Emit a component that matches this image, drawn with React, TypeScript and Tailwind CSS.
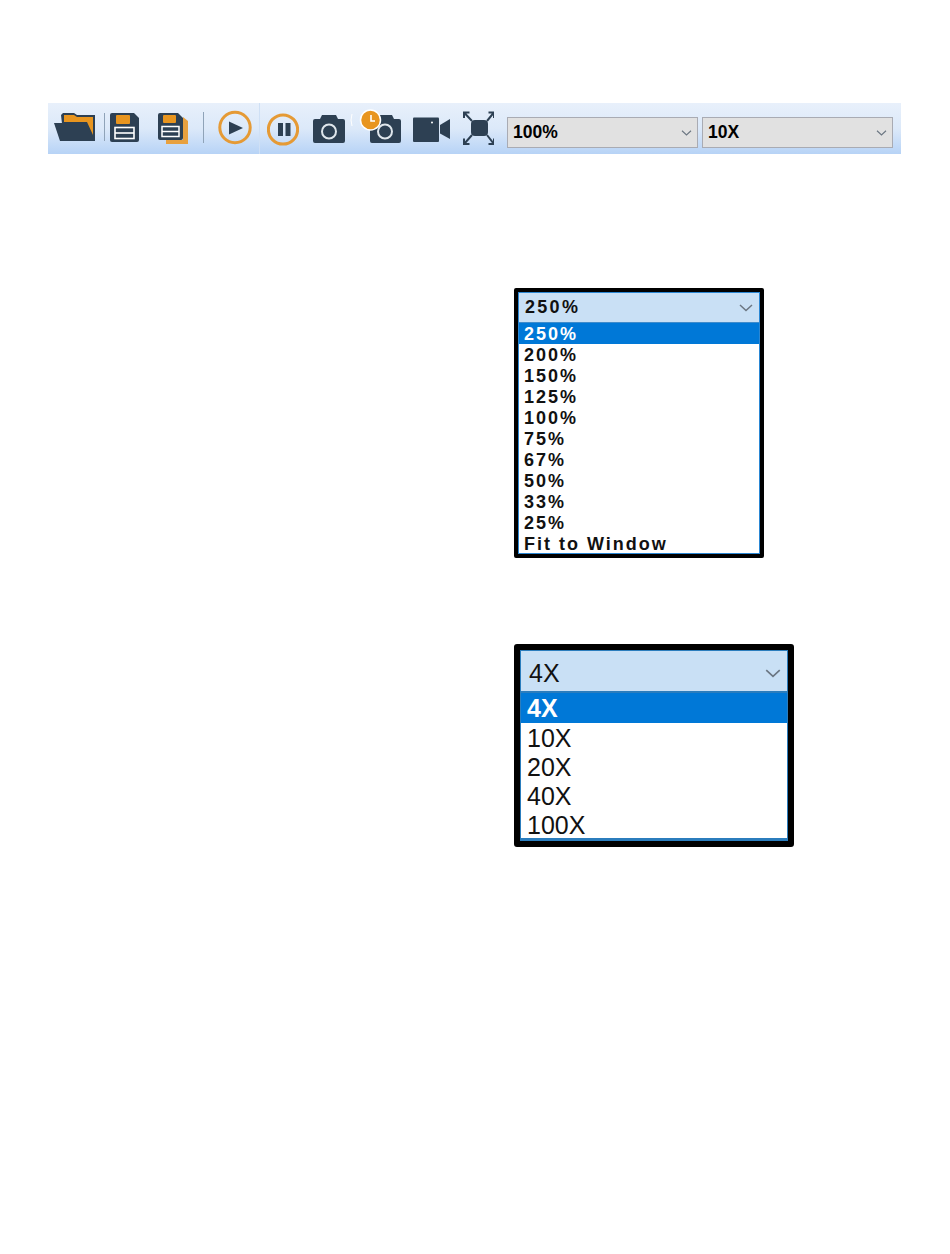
const DARK = "#2d4053";
const ORANGE = "#e8951f";

const FolderIcon = () => (
  <svg className="ml-[6px] w-[43px] h-[51px] shrink-0" viewBox="0 0 43 51">
    <path d="M7 12 L9 10 H20 L23 12 H41 V38 H10 Z" fill={DARK} />
    <path d="M10 12 H20 L23 14 H39 V32 L33 19 H10 Z" fill={ORANGE} />
    <path d="M0 20 H31 L41 38 H6 Z" fill={DARK} />
  </svg>
);

const SaveIcon = () => (
  <svg className="ml-[5px] w-[29px] h-[51px] shrink-0" viewBox="0 0 29 51">
    <path d="M2 10 H24 L29 15 V37 Q29 39 27 39 H2 Q0 39 0 37 V12 Q0 10 2 10 Z" fill={DARK} />
    <rect x="6" y="12" width="14" height="9" rx="1" fill={ORANGE} />
    <rect x="5" y="24.5" width="19" height="11" fill="none" stroke="#ffffff" strokeWidth="1.6" />
    <path d="M5 30 H24" stroke="#ffffff" strokeWidth="1.6" />
  </svg>
);

const SaveCopyIcon = () => (
  <svg className="ml-[19px] w-[30px] h-[51px] shrink-0" viewBox="0 0 30 51">
    <path d="M8 37 V41 H30 V18 L25 14 V37 Z" fill="#e8a13f" />
    <path d="M2 10 H20 L25 15 V35 Q25 37 23 37 H2 Q0 37 0 35 V12 Q0 10 2 10 Z" fill={DARK} />
    <rect x="5" y="12" width="13" height="8" rx="1" fill={ORANGE} />
    <rect x="4" y="23.5" width="17" height="10" fill="none" stroke="#ffffff" strokeWidth="1.5" />
    <path d="M4 28.5 H21" stroke="#ffffff" strokeWidth="1.5" />
  </svg>
);

const PlayIcon = () => (
  <svg className="ml-[14px] w-[34px] h-[51px] shrink-0" viewBox="0 0 34 51">
    <circle cx="17" cy="24.5" r="15.2" fill="none" stroke="#e59a35" strokeWidth="3" />
    <path d="M11 18.5 L25 25 L11 31.5 Z" fill={DARK} />
  </svg>
);

const PauseIcon = () => (
  <svg className="ml-[7px] w-[32px] h-[51px] shrink-0" viewBox="0 0 32 51">
    <circle cx="16" cy="26.5" r="14.6" fill="none" stroke="#e59a35" strokeWidth="3" />
    <rect x="11" y="20" width="5" height="13" fill={DARK} />
    <rect x="18.5" y="20" width="5" height="13" fill={DARK} />
  </svg>
);

const CameraIcon = () => (
  <svg className="ml-[14px] w-[32px] h-[51px] shrink-0" viewBox="0 0 32 51">
    <path d="M2 16 H7 L9 12 H23 L25 16 H30 Q32 16 32 18 V38 Q32 40 30 40 H2 Q0 40 0 38 V18 Q0 16 2 16 Z" fill={DARK} />
    <circle cx="16" cy="28.5" r="7" fill="none" stroke="#dfe6ec" strokeWidth="2" />
  </svg>
);

const TimerCameraIcon = () => (
  <svg className="ml-[15px] w-[41px] h-[51px] shrink-0 overflow-visible" viewBox="0 0 41 51">
    <path d="M-8 11 Q-10 17 -8 23" fill="none" stroke="#ffffff" strokeWidth="1" />
    <path d="M12 16 H16 L18 12 H32 L34 16 H39 Q41 16 41 18 V38 Q41 40 39 40 H12 Q10 40 10 38 V18 Q10 16 12 16 Z" fill={DARK} />
    <circle cx="25" cy="28.5" r="7" fill="none" stroke="#dfe6ec" strokeWidth="2" />
    <circle cx="10.5" cy="17" r="10" fill={ORANGE} stroke="#ffffff" strokeWidth="1.5" />
    <path d="M11 12 V18 H15" fill="none" stroke="#ffffff" strokeWidth="1.6" />
  </svg>
);

const VideoIcon = () => (
  <svg className="ml-[12px] w-[37px] h-[51px] shrink-0" viewBox="0 0 37 51">
    <rect x="0" y="14.5" width="26" height="24.5" rx="1" fill={DARK} />
    <path d="M27 22 L37 16 V36 L27 30.5 Z" fill={DARK} />
    <circle cx="19" cy="19.5" r="1" fill="#ffffff" />
  </svg>
);

const FitIcon = () => (
  <svg className="ml-[13px] w-[31px] h-[51px] shrink-0" viewBox="0 0 31 51">
    <rect x="8" y="17" width="17" height="16" rx="4" fill={DARK} />
    <g fill="none" stroke={DARK} strokeWidth="2">
      <path d="M1 15 V9.5 H6.5 M1.5 10 L9 18" />
      <path d="M31 15 V9.5 H25.5 M30.5 10 L24 18" />
      <path d="M1 35.5 V41 H6.5 M1.5 40.5 L9 32" />
      <path d="M31 35.5 V41 H25.5 M30.5 40.5 L24 32" />
    </g>
  </svg>
);

const Chevron = ({ className }: { className: string }) => (
  <svg className={className} viewBox="0 0 14 8" fill="none" stroke="#6b7682" strokeWidth="1.5">
    <path d="M1 1 L7 6.5 L13 1" />
  </svg>
);

const ToolbarSelect = ({ value, className }: { value: string; className: string }) => (
  <div className={`${className} mt-[14px] w-[191px] h-[31px] shrink-0 flex items-center justify-between pl-[5px] pr-[5px] bg-[#e1e1e1] border-[1.5px] border-[#a9abb3] font-bold text-[17.5px] text-black`}>
    <span>{value}</span>
    <Chevron className="w-[11px] h-[6px]" />
  </div>
);

const zoomOptions = ["250%", "200%", "150%", "125%", "100%", "75%", "67%", "50%", "33%", "25%", "Fit to Window"];
const lensOptions = ["4X", "10X", "20X", "40X", "100X"];

export default function App() {
  return (
    <div className="w-[950px] h-[1254px] bg-white flex flex-col pt-[103px] font-['Liberation_Sans',Arial,sans-serif]">
      {/* toolbar */}
      <div className="ml-[48px] w-[853px] h-[51px] flex items-start bg-gradient-to-b from-[#e8f0fb] via-[#dce9f9] to-[#b7d3f6]">
        <FolderIcon />
        <div className="ml-[7px] mt-[10px] w-px h-[28px] bg-[#8fa3b8]" />
        <SaveIcon />
        <SaveCopyIcon />
        <div className="ml-[15px] mt-[9px] w-px h-[31px] bg-[#8fa3b8]" />
        <PlayIcon />
        <div className="ml-[7px] w-px h-[51px] bg-[#cfe0f5]" />
        <PauseIcon />
        <CameraIcon />
        <TimerCameraIcon />
        <VideoIcon />
        <FitIcon />
        <ToolbarSelect value="100%" className="ml-[13px]" />
        <ToolbarSelect value="10X" className="ml-[4px]" />
      </div>

      {/* zoom dropdown */}
      <div className="ml-[514px] mt-[134px] w-[250px] h-[270px] border-[4px] border-black rounded-[2px] bg-white">
        <div className="h-full border-[1.5px] border-[#2b87d3] flex flex-col">
          <div className="h-[30px] shrink-0 flex items-center justify-between pl-[6px] pr-[6px] bg-[#c9e0f5] border-b border-[#3f8ccc] font-bold text-[18px] tracking-[2.3px] text-[#111111]">
            <span>250%</span>
            <Chevron className="w-[14px] h-[8px]" />
          </div>
          {zoomOptions.map((opt, i) => (
            <div
              key={opt}
              className={`h-[21px] shrink-0 flex items-center pl-[5px] pt-[2px] font-bold text-[18px] tracking-[2px] ${i === 0 ? "bg-[#0078d7] text-white" : "text-[#111111]"}`}
            >
              {opt}
            </div>
          ))}
        </div>
      </div>

      {/* lens dropdown */}
      <div className="ml-[514px] mt-[86px] w-[280px] h-[203px] border-[6px] border-black rounded-[3px] bg-white">
        <div className="h-full border border-b-[3px] border-[#2b7dbd] flex flex-col">
          <div className="h-[42px] shrink-0 flex items-center justify-between pl-[8px] pr-[6px] pt-[5px] bg-[#c9e0f5] border-b-2 border-[#2b7dbd] text-[25px] text-[#111111]">
            <span>4X</span>
            <Chevron className="w-[16px] h-[9px]" />
          </div>
          {lensOptions.map((opt, i) => (
            <div
              key={opt}
              className={`shrink-0 flex items-center pl-[6px] pt-[2px] text-[25px] ${i === 0 ? "h-[30px] bg-[#0078d7] text-white font-bold" : "h-[29px] text-[#111111]"}`}
            >
              {opt}
            </div>
          ))}
        </div>
      </div>
    </div>
  );
}
